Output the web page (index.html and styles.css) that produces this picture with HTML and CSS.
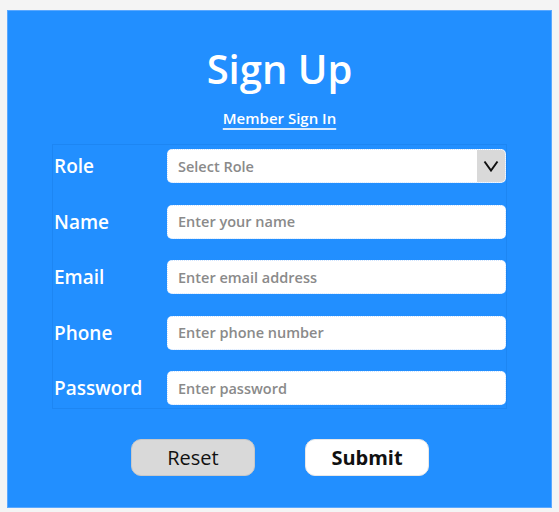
FILE: index.html
```html
<!DOCTYPE html>
<html>
<head>
<meta charset="utf-8">
<link rel="stylesheet" href="styles.css">
</head>
<body>
<div class="panel">
  <h1 class="title">Sign Up</h1>
  <div class="signin"><a href="#" class="signin-link">Member Sign In</a></div>
  <div class="form">
    <label class="label">Role</label>
    <div class="field select">
      <span class="ph">Select Role</span>
      <span class="arrow"><svg width="16" height="12" viewBox="0 0 16 12"><path d="M1.5 1.5 L8 10.5 L14.5 1.5" fill="none" stroke="#111" stroke-width="2"/></svg></span>
    </div>
    <label class="label">Name</label>
    <div class="field"><span class="ph">Enter your name</span></div>
    <label class="label">Email</label>
    <div class="field"><span class="ph">Enter email address</span></div>
    <label class="label">Phone</label>
    <div class="field"><span class="ph">Enter phone number</span></div>
    <label class="label">Password</label>
    <div class="field"><span class="ph">Enter password</span></div>
  </div>
  <div class="buttons">
    <button class="btn reset">Reset</button>
    <button class="btn submit">Submit</button>
  </div>
</div>
</body>
</html>
```

FILE: styles.css
```css
html, body {
  margin: 0;
  padding: 0;
}
body {
  background: #f4f4f4;
  padding: 10px 7px 4px 7px;
  font-family: "Open Sans", "Noto Sans", sans-serif;
}
.panel {
  background: #228fff;
  border: 1px solid #5aa8ff;
  height: 498px;
  box-sizing: border-box;
  display: flex;
  flex-direction: column;
}
.title {
  margin: 34px 0 0 0;
  text-align: center;
  color: #fff;
  font-size: 40px;
  line-height: 48px;
  font-weight: 600;
}
.signin {
  text-align: center;
  margin-top: 14px;
  line-height: 22px;
}
.signin-link {
  color: #fff;
  font-size: 15px;
  font-weight: 600;
  text-decoration: underline;
  text-decoration-thickness: 2px;
  text-underline-offset: 4px;
  text-decoration-color: #d8ebff;
}
.form {
  margin: 15px 44px 0 44px;
  padding: 4px 0 3px 0;
  border: 1px solid rgba(0, 70, 160, 0.12);
  display: grid;
  grid-template-columns: 114px 1fr;
  row-gap: 21.5px;
  align-items: center;
}
.label {
  color: #fff;
  font-size: 19px;
  font-weight: 600;
  padding-left: 1px;
}
.field {
  height: 34px;
  box-sizing: border-box;
  background: #fff;
  border: 1px dotted #cfe4ff;
  border-radius: 5px;
  display: flex;
  align-items: center;
  padding-left: 10px;
  overflow: hidden;
}
.ph {
  color: #8a8a8a;
  font-size: 14.5px;
  font-weight: 600;
}
.select {
  justify-content: space-between;
  padding-right: 0;
}
.arrow {
  width: 28px;
  height: 100%;
  background: #d9d9d9;
  display: flex;
  align-items: center;
  justify-content: center;
}
.buttons {
  display: flex;
  justify-content: center;
  gap: 50px;
  margin-top: 30px;
  padding-left: 1px;
}
.btn {
  width: 124px;
  height: 37px;
  border-radius: 10px;
  border: 1px solid #c8c8c8;
  font-family: "Open Sans", "Noto Sans", sans-serif;
  font-size: 20px;
  color: #111;
  padding: 0;
}
.reset {
  background: #d9d9d9;
  font-weight: 400;
}
.submit {
  background: #fff;
  border-color: #e8e8e8;
  font-weight: 700;
}
```
